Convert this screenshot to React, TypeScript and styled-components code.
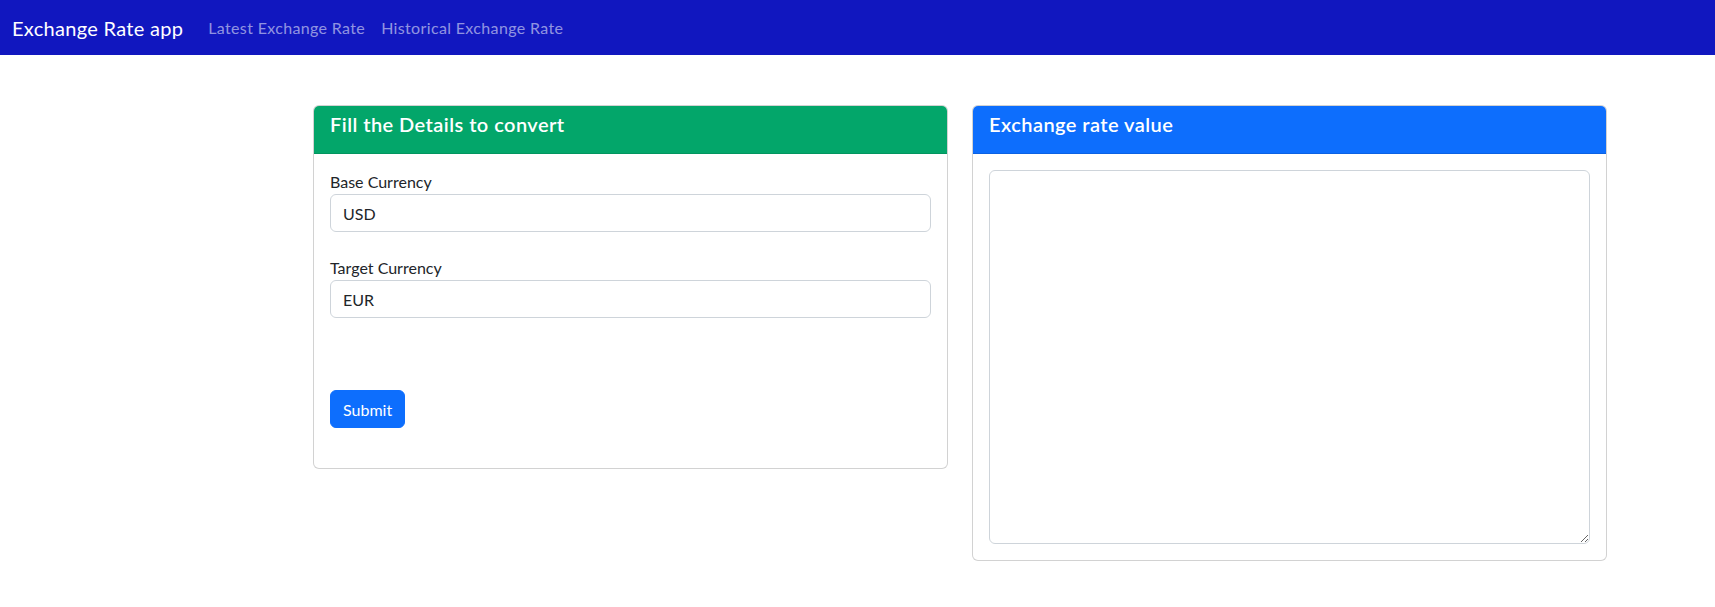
import React from "react";
import styled, { createGlobalStyle } from "styled-components";

const GlobalStyle = createGlobalStyle`
  * { box-sizing: border-box; }
  body {
    margin: 0;
    font-family: Lato, "Noto Sans", sans-serif;
    font-size: 16px;
    line-height: 1.5;
    color: #212529;
    background: #fff;
  }
`;

const NavBar = styled.nav`
  height: 55px;
  background: #1117bf;
  display: flex;
  align-items: center;
  padding: 0 12px;
`;

const Brand = styled.a`
  color: #fff;
  font-size: 20px;
  letter-spacing: 0.3px;
  margin-right: 17px;
  text-decoration: none;
`;

const NavLink = styled.a`
  color: rgba(255, 255, 255, 0.55);
  font-size: 16px;
  letter-spacing: 0.35px;
  padding: 0 8px;
  text-decoration: none;
`;

const Main = styled.main`
  display: flex;
  align-items: flex-start;
  gap: 24px;
  padding: 50px 0 0 313px;
`;

const Card = styled.section`
  width: 635px;
  border: 1px solid rgba(0, 0, 0, 0.175);
  border-radius: 6px;
  overflow: hidden;
  background: #fff;
`;

const CardHeader = styled.header<{ $bg: string }>`
  background: ${(p) => p.$bg};
  color: #fff;
  height: 48px;
  padding: 6px 16px 0;
  font-size: 20px;
  line-height: 24px;
  font-weight: 600;
  letter-spacing: 0.45px;
  border-bottom: 1px solid rgba(0, 0, 0, 0.1);
`;

const CardBody = styled.div<{ $pb?: number }>`
  padding: 16px 16px ${(p) => p.$pb ?? 16}px;
  display: flex;
  flex-direction: column;
`;

const Field = styled.div`
  margin-bottom: 24px;
  display: flex;
  flex-direction: column;
`;

const Label = styled.label`
  font-size: 16px;
  line-height: 24px;
`;

const Input = styled.input`
  height: 38px;
  border: 1px solid #ced4da;
  border-radius: 6px;
  padding: 6px 12px;
  font-family: inherit;
  font-size: 16px;
  color: #212529;
`;

const Spacer = styled.div`
  height: 48px;
`;

const Button = styled.button`
  align-self: flex-start;
  height: 38px;
  padding: 0 12px;
  background: #0d6efd;
  border: 1px solid #0d6efd;
  color: #fff;
  border-radius: 6px;
  font-family: inherit;
  font-size: 16px;
`;

const TextArea = styled.textarea`
  height: 374px;
  width: 100%;
  border: 1px solid #ced4da;
  border-radius: 6px;
  padding: 6px 12px;
  font-family: inherit;
  font-size: 16px;
  display: block;
`;

export default function App() {
  return (
    <>
      <GlobalStyle />
      <NavBar>
        <Brand href="#">Exchange Rate app</Brand>
        <NavLink href="#">Latest Exchange Rate</NavLink>
        <NavLink href="#">Historical Exchange Rate</NavLink>
      </NavBar>
      <Main>
        <Card>
          <CardHeader $bg="#03a66a">Fill the Details to convert</CardHeader>
          <CardBody $pb={40}>
            <Field>
              <Label>Base Currency</Label>
              <Input defaultValue="USD" />
            </Field>
            <Field>
              <Label>Target Currency</Label>
              <Input defaultValue="EUR" />
            </Field>
            <Spacer />
            <Button>Submit</Button>
          </CardBody>
        </Card>
        <Card>
          <CardHeader $bg="#0d6efd">Exchange rate value</CardHeader>
          <CardBody>
            <TextArea />
          </CardBody>
        </Card>
      </Main>
    </>
  );
}
